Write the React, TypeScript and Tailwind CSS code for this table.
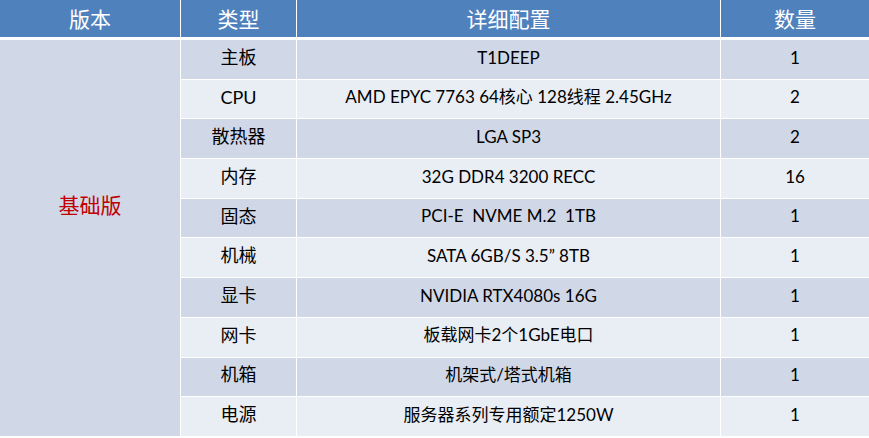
export default function App() {
  const rows = [
    { type: "主板", detail: "T1DEEP", qty: "1" },
    { type: "CPU", detail: "AMD EPYC 7763 64核心 128线程 2.45GHz", qty: "2" },
    { type: "散热器", detail: "LGA SP3", qty: "2" },
    { type: "内存", detail: "32G DDR4 3200 RECC", qty: "16" },
    { type: "固态", detail: "PCI-E  NVME M.2  1TB", qty: "1" },
    { type: "机械", detail: "SATA 6GB/S 3.5” 8TB", qty: "1" },
    { type: "显卡", detail: "NVIDIA RTX4080s 16G", qty: "1" },
    { type: "网卡", detail: "板载网卡2个1GbE电口", qty: "1" },
    { type: "机箱", detail: "机架式/塔式机箱", qty: "1" },
    { type: "电源", detail: "服务器系列专用额定1250W", qty: "1" },
  ];

  const font = { fontFamily: 'Lato, "Noto Sans CJK SC", sans-serif' };

  return (
    <div className="w-[869px] h-[438px] bg-white overflow-hidden" style={font}>
      <div className="grid grid-cols-[180px_115px_423px_1fr] gap-x-px h-[37px] text-white text-[21px]">
        <div className="bg-[#4f81bd] flex items-center justify-center">版本</div>
        <div className="bg-[#4f81bd] flex items-center justify-center">类型</div>
        <div className="bg-[#4f81bd] flex items-center justify-center">详细配置</div>
        <div className="bg-[#4f81bd] flex items-center justify-center">数量</div>
      </div>
      <div className="mt-[3px] grid grid-cols-[180px_115px_423px_1fr] grid-rows-[repeat(10,38.7px)] gap-px text-[17px] text-black">
        <div className="row-span-10 bg-[#d0d8e8] flex items-center justify-center text-[21px] text-[#c00000] pb-[66px]">
          基础版
        </div>
        {rows.map((r, i) => {
          const bg = i % 2 === 0 ? "bg-[#d0d8e8]" : "bg-[#e9edf4]";
          return [
            <div key={`t${i}`} className={`${bg} flex items-center justify-center pb-[4px] text-[18px]`}>
              {r.type}
            </div>,
            <div key={`d${i}`} className={`${bg} flex items-center justify-center pb-[4px] whitespace-pre`}>
              {r.detail}
            </div>,
            <div key={`q${i}`} className={`${bg} flex items-center justify-center pb-[4px]`}>
              {r.qty}
            </div>,
          ];
        })}
      </div>
    </div>
  );
}
